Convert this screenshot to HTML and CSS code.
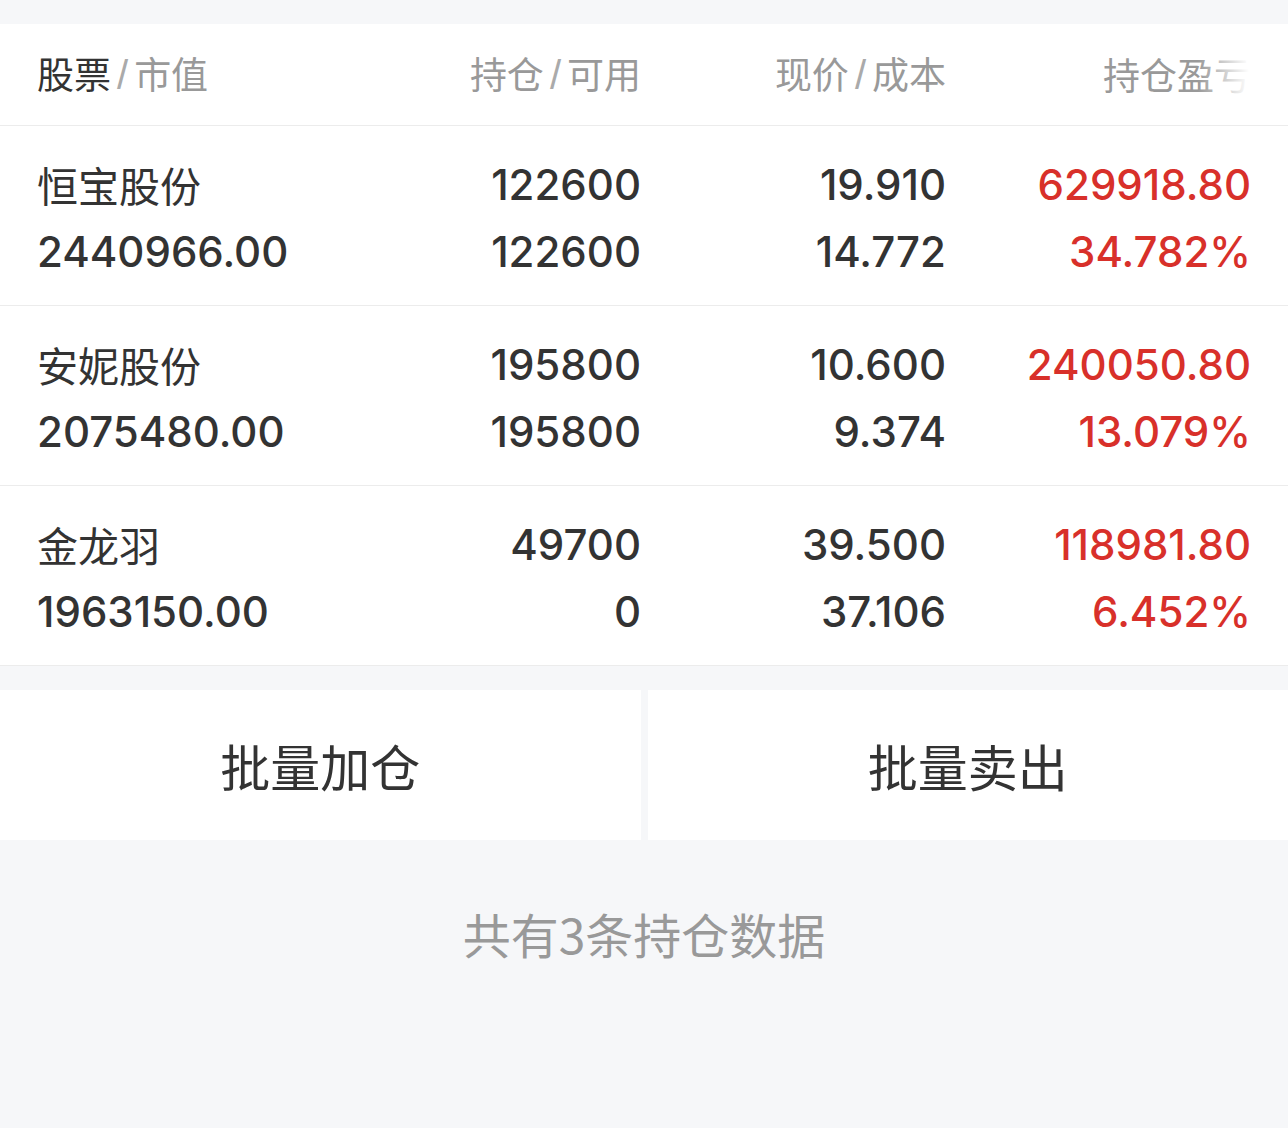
FILE: index.html
```html
<!DOCTYPE html>
<html lang="zh-CN">
<head>
    <meta charset="UTF-8">
    <meta name="viewport" content="width=device-width, initial-scale=1.0">
    <title>持仓</title>
    <link rel="stylesheet" href="styles.css">
</head>
<body>
    <div class="page">
        <!-- 表头 -->
        <div class="table-head">
            <div class="th th-left"><span class="th-main">股票</span><span class="sep">/</span>市值</div>
            <div class="th">持仓<span class="sep">/</span>可用</div>
            <div class="th">现价<span class="sep">/</span>成本</div>
            <div class="th">持仓盈亏</div>
        </div>

        <!-- 持仓列表 -->
        <div class="position-list">
            <div class="position-row">
                <div class="cell cell-left">
                    <div class="name">恒宝股份</div>
                    <div class="num">2440966.00</div>
                </div>
                <div class="cell">
                    <div class="num">122600</div>
                    <div class="num">122600</div>
                </div>
                <div class="cell">
                    <div class="num">19.910</div>
                    <div class="num">14.772</div>
                </div>
                <div class="cell up">
                    <div class="num">629918.80</div>
                    <div class="num">34.782%</div>
                </div>
            </div>

            <div class="position-row">
                <div class="cell cell-left">
                    <div class="name">安妮股份</div>
                    <div class="num">2075480.00</div>
                </div>
                <div class="cell">
                    <div class="num">195800</div>
                    <div class="num">195800</div>
                </div>
                <div class="cell">
                    <div class="num">10.600</div>
                    <div class="num">9.374</div>
                </div>
                <div class="cell up">
                    <div class="num">240050.80</div>
                    <div class="num">13.079%</div>
                </div>
            </div>

            <div class="position-row">
                <div class="cell cell-left">
                    <div class="name">金龙羽</div>
                    <div class="num">1963150.00</div>
                </div>
                <div class="cell">
                    <div class="num">49700</div>
                    <div class="num">0</div>
                </div>
                <div class="cell">
                    <div class="num">39.500</div>
                    <div class="num">37.106</div>
                </div>
                <div class="cell up">
                    <div class="num">118981.80</div>
                    <div class="num">6.452%</div>
                </div>
            </div>
        </div>

        <!-- 操作按钮 -->
        <div class="actions">
            <button class="action-btn">批量加仓</button>
            <button class="action-btn">批量卖出</button>
        </div>

        <div class="summary">共有3条持仓数据</div>
    </div>
</body>
</html>
```

FILE: styles.css
```css
body {
    margin: 0;
    padding: 0;
    background-color: #f6f7f9;
    font-family: "Noto Sans CJK SC", sans-serif;
    color: #333;
}

.page {
    padding-top: 24px;
}

.table-head,
.position-row {
    display: grid;
    grid-template-columns: 300px 304px 305px 305px;
    padding: 0 37px;
    background-color: #fff;
}

.table-head {
    position: relative;
    height: 102px;
    align-items: center;
    border-bottom: 1px solid #ececec;
    box-sizing: border-box;
}

/* 右侧渐隐，表头可横向滑动 */
.table-head::after {
    content: "";
    position: absolute;
    top: 0;
    right: 30px;
    width: 60px;
    height: 100%;
    background: linear-gradient(to right, rgba(255, 255, 255, 0), #fff 85%);
}

.th {
    font-size: 37px;
    line-height: 50px;
    margin-top: -2px;
    color: #999;
    text-align: right;
    white-space: nowrap;
}

.th-left {
    text-align: left;
}

.th-main {
    color: #333;
}

.sep {
    display: inline-block;
    margin: 0 6px;
    font-family: "Liberation Sans", sans-serif;
    font-size: 40px;
    color: #aaa;
}

.position-row {
    padding-top: 25px;
    padding-bottom: 20px;
    border-bottom: 1px solid #ececec;
}

.cell {
    text-align: right;
    line-height: 67px;
}

.cell-left {
    text-align: left;
}

.name {
    font-size: 41px;
    color: #333;
}

.num {
    font-family: Inter, "Noto Sans", sans-serif;
    font-size: 42px;
    font-weight: 500;
    color: #333;
}

.up .num {
    color: #d8302a;
}

.actions {
    display: flex;
    gap: 7px;
    margin-top: 24px;
}

.action-btn {
    flex: 1;
    height: 150px;
    border: none;
    background-color: #fff;
    font-family: "Noto Sans CJK SC", sans-serif;
    font-size: 50px;
    color: #333;
    padding: 0;
}

.summary {
    padding-top: 63px;
    text-align: center;
    font-size: 48px;
    line-height: 60px;
    color: #999;
}
```
